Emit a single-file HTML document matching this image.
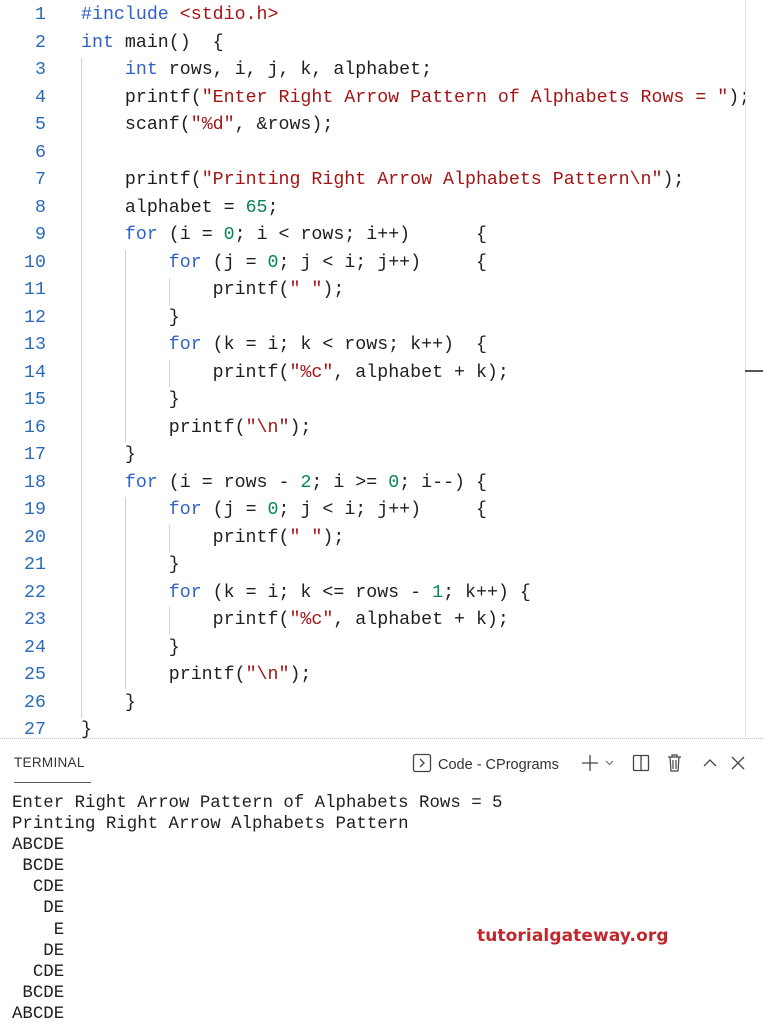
<!DOCTYPE html>
<html><head><meta charset="utf-8"><style>
body{margin:0;width:763px;height:1024px;background:#fff;overflow:hidden;position:relative;font-family:"Liberation Mono",monospace}
.ed{position:absolute;left:0;top:2px;}
.l{height:27.5px;line-height:27.5px;font-size:18.3px;white-space:pre;color:#1f1f1f;position:relative}
.n{display:inline-block;width:46px;text-align:right;color:#2b6ab8;margin-right:35px}
.k{color:#2f62c8}.s{color:#a31515}.g{color:#098658}
.guide{position:absolute;width:1px;background:#d0d0d0}
.term{position:absolute;left:12px;top:793px;font-size:17.4px;line-height:21.1px;white-space:pre;color:#1f1f1f}
</style></head><body>
<div class="guide" style="left:81px;top:58px;height:660px"></div>
<div class="guide" style="left:125px;top:250px;height:192px"></div>
<div class="guide" style="left:169px;top:278px;height:27px"></div>
<div class="guide" style="left:169px;top:360px;height:27px"></div>
<div class="guide" style="left:125px;top:497px;height:192px"></div>
<div class="guide" style="left:169px;top:525px;height:27px"></div>
<div class="guide" style="left:169px;top:607px;height:27px"></div>
<div class="ed">
<div class="l"><span class="n">1</span><span class="k">#include</span> <span class="s">&lt;stdio.h&gt;</span></div>
<div class="l"><span class="n">2</span><span class="k">int</span> main()  {</div>
<div class="l"><span class="n">3</span>    <span class="k">int</span> rows, i, j, k, alphabet;</div>
<div class="l"><span class="n">4</span>    printf(<span class="s">"Enter Right Arrow Pattern of Alphabets Rows = "</span>);</div>
<div class="l"><span class="n">5</span>    scanf(<span class="s">"%d"</span>, &amp;rows);</div>
<div class="l"><span class="n">6</span></div>
<div class="l"><span class="n">7</span>    printf(<span class="s">"Printing Right Arrow Alphabets Pattern\n"</span>);</div>
<div class="l"><span class="n">8</span>    alphabet = <span class="g">65</span>;</div>
<div class="l"><span class="n">9</span>    <span class="k">for</span> (i = <span class="g">0</span>; i &lt; rows; i++)      {</div>
<div class="l"><span class="n">10</span>        <span class="k">for</span> (j = <span class="g">0</span>; j &lt; i; j++)     {</div>
<div class="l"><span class="n">11</span>            printf(<span class="s">" "</span>);</div>
<div class="l"><span class="n">12</span>        }</div>
<div class="l"><span class="n">13</span>        <span class="k">for</span> (k = i; k &lt; rows; k++)  {</div>
<div class="l"><span class="n">14</span>            printf(<span class="s">"%c"</span>, alphabet + k);</div>
<div class="l"><span class="n">15</span>        }</div>
<div class="l"><span class="n">16</span>        printf(<span class="s">"\n"</span>);</div>
<div class="l"><span class="n">17</span>    }</div>
<div class="l"><span class="n">18</span>    <span class="k">for</span> (i = rows - <span class="g">2</span>; i &gt;= <span class="g">0</span>; i--) {</div>
<div class="l"><span class="n">19</span>        <span class="k">for</span> (j = <span class="g">0</span>; j &lt; i; j++)     {</div>
<div class="l"><span class="n">20</span>            printf(<span class="s">" "</span>);</div>
<div class="l"><span class="n">21</span>        }</div>
<div class="l"><span class="n">22</span>        <span class="k">for</span> (k = i; k &lt;= rows - <span class="g">1</span>; k++) {</div>
<div class="l"><span class="n">23</span>            printf(<span class="s">"%c"</span>, alphabet + k);</div>
<div class="l"><span class="n">24</span>        }</div>
<div class="l"><span class="n">25</span>        printf(<span class="s">"\n"</span>);</div>
<div class="l"><span class="n">26</span>    }</div>
<div class="l"><span class="n">27</span>}</div>
</div>
<div style="position:absolute;left:745px;top:0;width:1px;height:737px;background:#e0e0e0"></div>
<div style="position:absolute;left:745px;top:370px;width:18px;height:2px;background:#555"></div>
<div style="position:absolute;left:0;top:738px;width:763px;border-top:1px dotted #bbb"></div>
<div style="position:absolute;left:14px;top:755px;font-family:'Liberation Sans',sans-serif;font-size:13.5px;color:#333;letter-spacing:.3px">TERMINAL</div>
<div style="position:absolute;left:14px;top:782px;width:77px;height:1px;background:#555"></div>
<svg style="position:absolute;left:412px;top:753px" width="340" height="22" viewBox="0 0 340 22">
<rect x="1.5" y="1.5" width="17" height="17" rx="2" fill="none" stroke="#444" stroke-width="1.3"/>
<path d="M8 6l4 4-4 4" fill="none" stroke="#444" stroke-width="1.3"/>
<text x="26" y="16" font-family="Liberation Sans,sans-serif" font-size="14.5" fill="#333">Code - CPrograms</text>
<path d="M178 2v16M170 10h16" stroke="#444" stroke-width="1.3"/>
<path d="M194 8l3.5 3.5L201 8" fill="none" stroke="#666" stroke-width="1"/>
<rect x="221.5" y="2.5" width="15" height="15" rx="1" fill="none" stroke="#444" stroke-width="1.3"/>
<path d="M229 2.5v15" stroke="#444" stroke-width="1.3"/>
<path d="M256 4h13M260 4V2h5v2M258 4l1 14h7l1-14M261 7v9M264 7v9" fill="none" stroke="#444" stroke-width="1.2"/>
<path d="M292 13l6-6 6 6" fill="none" stroke="#444" stroke-width="1.3"/>
<path d="M320 4l12 12M332 4l-12 12" stroke="#444" stroke-width="1.3"/>
</svg>
<div class="term">Enter Right Arrow Pattern of Alphabets Rows = 5
Printing Right Arrow Alphabets Pattern
ABCDE
 BCDE
  CDE
   DE
    E
   DE
  CDE
 BCDE
ABCDE</div>
<div style="position:absolute;left:477px;top:926px;font-family:'DejaVu Sans',sans-serif;font-weight:bold;font-size:17px;color:#c0282d;letter-spacing:.1px">tutorialgateway.org</div>
</body></html>
